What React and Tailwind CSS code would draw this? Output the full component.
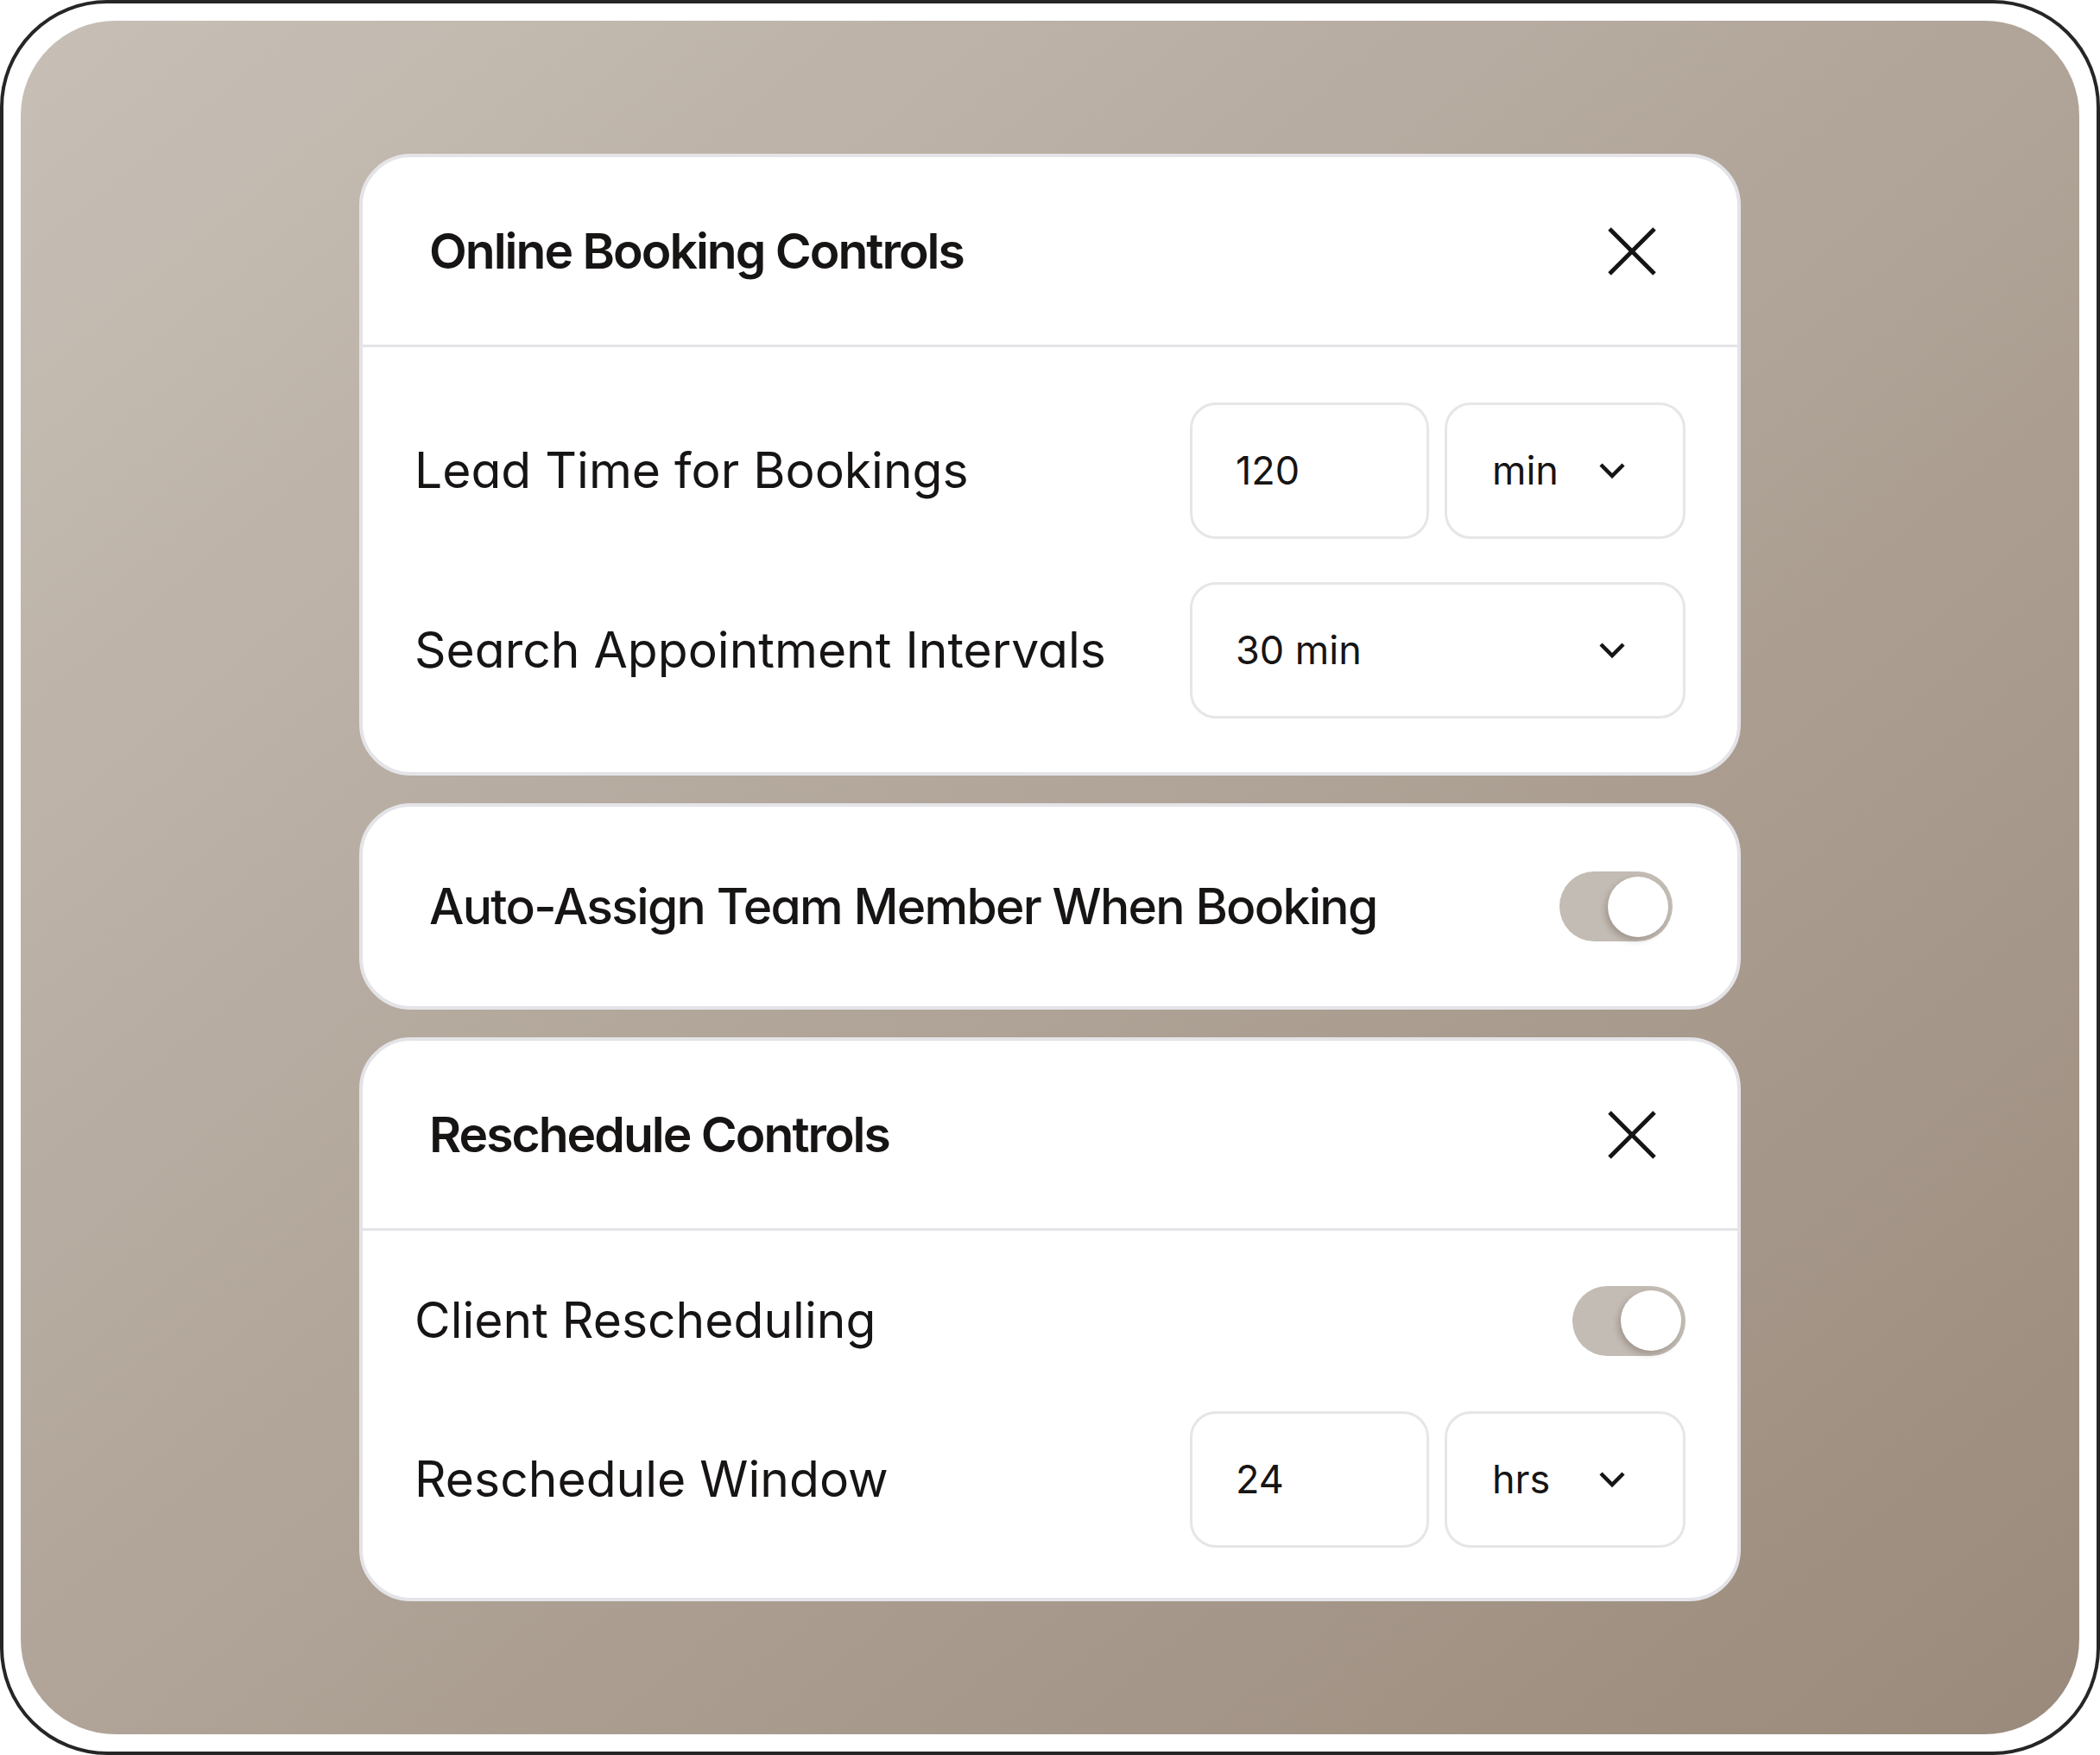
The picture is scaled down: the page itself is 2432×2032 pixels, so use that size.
import { useState } from 'react'

const FONT = "font-['Inter','Liberation_Sans',sans-serif] [font-feature-settings:'cv11']"

function CloseIcon() {
  return (
    <svg width="56" height="56" viewBox="0 0 56 56" fill="none" stroke="#171414" strokeWidth="5" aria-hidden="true">
      <line x1="2" y1="2" x2="54" y2="54" />
      <line x1="54" y1="2" x2="2" y2="54" />
    </svg>
  )
}

function Chevron() {
  return (
    <svg width="32" height="20" viewBox="0 0 32 20" fill="none" stroke="#171414" strokeWidth="4.5" aria-hidden="true">
      <polyline points="3,3 16,16 29,3" />
    </svg>
  )
}

function Toggle({ on, onToggle }) {
  return (
    <button
      type="button"
      role="switch"
      aria-checked={on}
      onClick={onToggle}
      className="flex items-center justify-end w-[131px] h-[81px] rounded-full bg-[#c3bcb4] px-[5px] shrink-0"
    >
      <span className="block w-[70px] h-[70px] rounded-full bg-white shadow-[-3px_4px_7px_rgba(60,45,30,0.25)]" />
    </button>
  )
}

function Box({ children, className = '' }) {
  return (
    <div className={`flex items-center h-[158px] rounded-[30px] border-[3px] border-[#e6e6e6] bg-white ${className}`}>
      {children}
    </div>
  )
}

function ValueUnit({ value, unit }) {
  return (
    <div className="flex gap-[18px]">
      <Box className="w-[277px] pl-[50px]">
        <span className="text-[45px] text-[#171414]">{value}</span>
      </Box>
      <Box className="w-[279px] pl-[52px] pr-[66px] justify-between">
        <span className="text-[45px] text-[#171414]">{unit}</span>
        <Chevron />
      </Box>
    </div>
  )
}

function Row({ label, children, tall = true }) {
  return (
    <div className={`flex items-center justify-between ${tall ? 'h-[158px]' : 'h-[80px]'}`}>
      <span className="text-[57px] text-[#171414]">{label}</span>
      {children}
    </div>
  )
}

function Header({ title }) {
  return (
    <div className="flex items-center justify-between h-[220px] border-b-[3px] border-[#e4e4e8] pl-[77px] pr-[94px]">
      <h2 className="text-[57px] font-semibold text-[#171414] tracking-[-0.035em]">{title}</h2>
      <button type="button" aria-label="Close">
        <CloseIcon />
      </button>
    </div>
  )
}

export default function App() {
  const [autoAssign, setAutoAssign] = useState(true)
  const [clientResched, setClientResched] = useState(true)

  return (
    <div className={`w-[2432px] h-[2032px] bg-white rounded-[124px] border-[4px] border-[#262626] p-[20px] ${FONT}`}>
      <div className="h-full rounded-[110px] bg-gradient-to-br from-[#c7bfb6] to-[#9a8a7b] flex flex-col items-center justify-center gap-[32px]">
        {/* Online booking */}
        <div className="w-[1600px] bg-white rounded-[60px] border-[4px] border-[#e4e4e8]">
          <Header title="Online Booking Controls" />
          <div className="flex flex-col gap-[50px] px-[60px] pt-[64px] pb-[62px]">
            <Row label="Lead Time for Bookings">
              <ValueUnit value="120" unit="min" />
            </Row>
            <Row label="Search Appointment Intervals">
              <Box className="w-[574px] pl-[50px] pr-[66px] justify-between">
                <span className="text-[45px] text-[#171414]">30 min</span>
                <Chevron />
              </Box>
            </Row>
          </div>
        </div>

        {/* Auto-assign */}
        <div className="w-[1600px] h-[239px] bg-white rounded-[60px] border-[4px] border-[#e4e4e8] flex items-center justify-between pl-[77px] pr-[75px]">
          <span className="text-[57px] font-medium text-[#171414] tracking-[-0.03em]">Auto-Assign Team Member When Booking</span>
          <Toggle on={autoAssign} onToggle={() => setAutoAssign(!autoAssign)} />
        </div>

        {/* Reschedule */}
        <div className="w-[1600px] bg-white rounded-[60px] border-[4px] border-[#e4e4e8]">
          <Header title="Reschedule Controls" />
          <div className="flex flex-col gap-[65px] px-[60px] pt-[64px] pb-[58px]">
            <Row label="Client Rescheduling" tall={false}>
              <Toggle on={clientResched} onToggle={() => setClientResched(!clientResched)} />
            </Row>
            <Row label="Reschedule Window">
              <ValueUnit value="24" unit="hrs" />
            </Row>
          </div>
        </div>
      </div>
    </div>
  )
}
